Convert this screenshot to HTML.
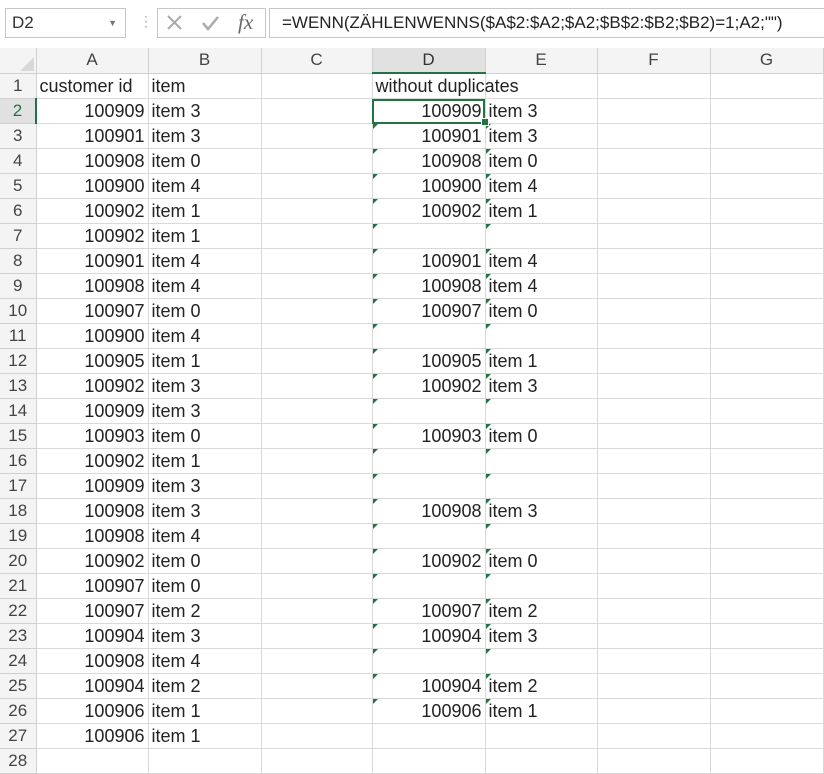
<!DOCTYPE html><html><head><style>
body{margin:0;width:824px;height:773px;overflow:hidden;background:#fff;font-family:"Liberation Sans",sans-serif;position:relative}
.box{position:absolute;border:1px solid #c6c6c6;background:#fff;box-sizing:border-box}
table{position:absolute;left:0;top:48px;width:823px;border-collapse:collapse;table-layout:fixed;font-size:18px;color:#222}
td{height:24px;padding:0 3px;border-right:1px solid #d9d9d9;border-bottom:1px solid #d9d9d9;white-space:nowrap;overflow:visible;position:relative;line-height:24px}
tr.h td{background:#f4f4f4;text-align:center;color:#444;border-color:#d0d0d0;font-size:17px}
td.r{background:#f4f4f4;text-align:center;color:#444;padding:0;border-color:#d0d0d0;font-size:17px}
td.n{text-align:right}
td.t::before{content:"";position:absolute;left:0;top:0;border-top:5px solid #217346;border-right:5px solid transparent}
</style></head><body>
<div class="box" style="left:5px;top:8px;width:121px;height:30px;font-size:17px;line-height:28px;padding-left:6px;color:#333">D2<span style="position:absolute;right:8px;top:0;font-size:9px;color:#777">▼</span></div>
<div style="position:absolute;left:139px;top:13px;color:#aaa;font-size:14px">⋮</div>
<div class="box" style="left:157px;top:8px;width:109px;height:30px">
<svg width="109" height="28" style="position:absolute;left:0;top:0"><path d="M10 7l13 13M23 7L10 20" stroke="#aaa" stroke-width="2" fill="none"/><path d="M45 14l5 6 10-12" stroke="#aaa" stroke-width="2.5" fill="none"/></svg>
<span style="position:absolute;left:80px;top:1px;font-family:'Liberation Serif',serif;font-style:italic;font-size:21px;color:#666">fx</span></div>
<div class="box" style="left:269px;top:8px;width:556px;height:30px;font-size:17px;line-height:28px;padding-left:12px;color:#222">=WENN(ZÄHLENWENNS($A$2:$A2;$A2;$B$2:$B2;$B2)=1;A2;"")</div>
<table>
<colgroup><col style="width:36px"><col style="width:112px"><col style="width:113px"><col style="width:111px"><col style="width:113px"><col style="width:112px"><col style="width:113px"><col style="width:113px"></colgroup>
<tr class="h"><td style="background:#f4f4f4"><svg width="14" height="14" style="position:absolute;right:2px;bottom:2px"><path d="M14 0V14H0Z" fill="#d8d8d8"/></svg></td><td>A</td><td>B</td><td>C</td><td style="background:#e1e1e1;border-bottom:2px solid #217346;color:#333">D</td><td>E</td><td>F</td><td>G</td></tr>
<tr><td class="r">1</td><td>customer id</td><td>item</td><td></td><td>without duplicates</td><td></td><td></td><td></td></tr>
<tr><td class="r" style="background:#e1e1e1;border-right:2px solid #217346;color:#217346">2</td><td class="n">100909</td><td>item 3</td><td></td><td class="n" style="outline:2px solid #217346;outline-offset:-2px">100909</td><td>item 3</td><td></td><td></td></tr>
<tr><td class="r">3</td><td class="n">100901</td><td>item 3</td><td></td><td class="n t">100901</td><td class="t">item 3</td><td></td><td></td></tr>
<tr><td class="r">4</td><td class="n">100908</td><td>item 0</td><td></td><td class="n t">100908</td><td class="t">item 0</td><td></td><td></td></tr>
<tr><td class="r">5</td><td class="n">100900</td><td>item 4</td><td></td><td class="n t">100900</td><td class="t">item 4</td><td></td><td></td></tr>
<tr><td class="r">6</td><td class="n">100902</td><td>item 1</td><td></td><td class="n t">100902</td><td class="t">item 1</td><td></td><td></td></tr>
<tr><td class="r">7</td><td class="n">100902</td><td>item 1</td><td></td><td class="t"></td><td class="t"></td><td></td><td></td></tr>
<tr><td class="r">8</td><td class="n">100901</td><td>item 4</td><td></td><td class="n t">100901</td><td class="t">item 4</td><td></td><td></td></tr>
<tr><td class="r">9</td><td class="n">100908</td><td>item 4</td><td></td><td class="n t">100908</td><td class="t">item 4</td><td></td><td></td></tr>
<tr><td class="r">10</td><td class="n">100907</td><td>item 0</td><td></td><td class="n t">100907</td><td class="t">item 0</td><td></td><td></td></tr>
<tr><td class="r">11</td><td class="n">100900</td><td>item 4</td><td></td><td class="t"></td><td class="t"></td><td></td><td></td></tr>
<tr><td class="r">12</td><td class="n">100905</td><td>item 1</td><td></td><td class="n t">100905</td><td class="t">item 1</td><td></td><td></td></tr>
<tr><td class="r">13</td><td class="n">100902</td><td>item 3</td><td></td><td class="n t">100902</td><td class="t">item 3</td><td></td><td></td></tr>
<tr><td class="r">14</td><td class="n">100909</td><td>item 3</td><td></td><td class="t"></td><td class="t"></td><td></td><td></td></tr>
<tr><td class="r">15</td><td class="n">100903</td><td>item 0</td><td></td><td class="n t">100903</td><td class="t">item 0</td><td></td><td></td></tr>
<tr><td class="r">16</td><td class="n">100902</td><td>item 1</td><td></td><td class="t"></td><td class="t"></td><td></td><td></td></tr>
<tr><td class="r">17</td><td class="n">100909</td><td>item 3</td><td></td><td class="t"></td><td class="t"></td><td></td><td></td></tr>
<tr><td class="r">18</td><td class="n">100908</td><td>item 3</td><td></td><td class="n t">100908</td><td class="t">item 3</td><td></td><td></td></tr>
<tr><td class="r">19</td><td class="n">100908</td><td>item 4</td><td></td><td class="t"></td><td class="t"></td><td></td><td></td></tr>
<tr><td class="r">20</td><td class="n">100902</td><td>item 0</td><td></td><td class="n t">100902</td><td class="t">item 0</td><td></td><td></td></tr>
<tr><td class="r">21</td><td class="n">100907</td><td>item 0</td><td></td><td class="t"></td><td class="t"></td><td></td><td></td></tr>
<tr><td class="r">22</td><td class="n">100907</td><td>item 2</td><td></td><td class="n t">100907</td><td class="t">item 2</td><td></td><td></td></tr>
<tr><td class="r">23</td><td class="n">100904</td><td>item 3</td><td></td><td class="n t">100904</td><td class="t">item 3</td><td></td><td></td></tr>
<tr><td class="r">24</td><td class="n">100908</td><td>item 4</td><td></td><td class="t"></td><td class="t"></td><td></td><td></td></tr>
<tr><td class="r">25</td><td class="n">100904</td><td>item 2</td><td></td><td class="n t">100904</td><td class="t">item 2</td><td></td><td></td></tr>
<tr><td class="r">26</td><td class="n">100906</td><td>item 1</td><td></td><td class="n t">100906</td><td class="t">item 1</td><td></td><td></td></tr>
<tr><td class="r">27</td><td class="n">100906</td><td>item 1</td><td></td><td></td><td></td><td></td><td></td></tr>
<tr><td class="r">28</td><td></td><td></td><td></td><td></td><td></td><td></td><td></td></tr>
</table>
<div style="position:absolute;left:481px;top:118px;width:6px;height:6px;background:#217346;border:1px solid #fff"></div>
</body></html>
